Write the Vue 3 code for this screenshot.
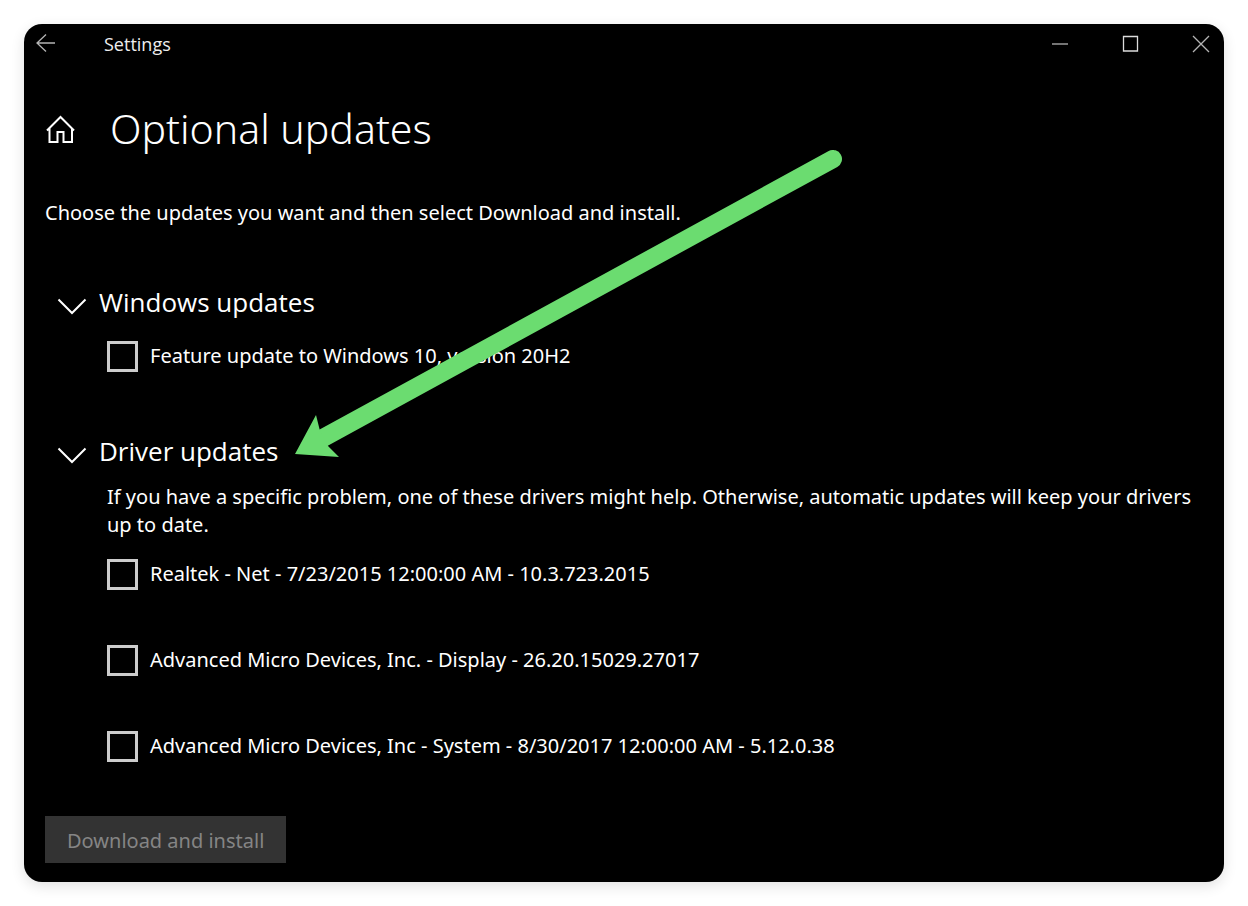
<script setup>
import { reactive } from 'vue'

const groups = reactive([
  {
    id: 'windows',
    title: 'Windows updates',
    note: '',
    open: true,
    items: [{ id: 'feature', label: 'Feature update to Windows 10, version 20H2', checked: false }],
  },
  {
    id: 'drivers',
    title: 'Driver updates',
    note: 'If you have a specific problem, one of these drivers might help. Otherwise, automatic updates will keep your drivers up to date.',
    open: true,
    items: [
      { id: 'realtek', label: 'Realtek - Net - 7/23/2015 12:00:00 AM - 10.3.723.2015', checked: false },
      { id: 'amd-display', label: 'Advanced Micro Devices, Inc. - Display - 26.20.15029.27017', checked: false },
      { id: 'amd-system', label: 'Advanced Micro Devices, Inc - System - 8/30/2017 12:00:00 AM - 5.12.0.38', checked: false },
    ],
  },
])
</script>

<template>
  <div class="window">
    <header class="titlebar">
      <button class="icon-button" type="button" aria-label="Back">
        <svg width="20" height="20" viewBox="0 0 20 20"><path d="M19 9H1M10 0.500L1 9L10 17.500" /></svg>
      </button>
      <span class="app-name">Settings</span>
      <div class="window-controls">
        <button class="icon-button" type="button" aria-label="Minimize">
          <svg width="18" height="18" viewBox="0 0 18 18"><path d="M0 9H16" /></svg>
        </button>
        <button class="icon-button" type="button" aria-label="Maximize">
          <svg class="bright" width="18" height="18" viewBox="0 0 18 18"><path d="M1.500 1.500H15.500V16H1.500Z" /></svg>
        </button>
        <button class="icon-button" type="button" aria-label="Close">
          <svg width="18" height="18" viewBox="0 0 18 18"><path d="M1 1L17 17M17 1L1 17" /></svg>
        </button>
      </div>
    </header>

    <main class="content">
      <div class="heading">
        <button class="icon-button" type="button" aria-label="Home">
          <svg class="home" width="30" height="32" viewBox="0 0 30 32">
            <path d="M2 18.500L15.500 5L29 18.500M4.500 16.500V30H12.500V20H18.500V30H27V16.500" />
          </svg>
        </button>
        <h1>Optional updates</h1>
      </div>
      <p class="intro">Choose the updates you want and then select Download and install.</p>

      <section v-for="group in groups" :key="group.id" class="group">
        <h2>
          <button class="disclosure" type="button" :aria-expanded="group.open" @click="group.open = !group.open">
            <svg class="chevron" :class="{ closed: !group.open }" width="30" height="18" viewBox="0 0 30 18">
              <path d="M1.500 2.500L15 16L28.500 2.500" />
            </svg>
            <span>{{ group.title }}</span>
          </button>
        </h2>
        <div v-if="group.open" class="group-body">
          <p v-if="group.note" class="note">{{ group.note }}</p>
          <ul>
            <li v-for="item in group.items" :key="item.id">
              <input :id="item.id" v-model="item.checked" type="checkbox" />
              <label :for="item.id">{{ item.label }}</label>
            </li>
          </ul>
        </div>
      </section>

      <button class="install" type="button" disabled>Download and install</button>
    </main>

    <svg class="pointer" width="548" height="310" viewBox="0 0 548 310" aria-hidden="true">
      <path class="shaft" d="M538 9L28 288" />
      <path class="head" d="M0 304L21 265L25 281L33 296L44 307Z" />
    </svg>
  </div>
</template>

<style>
body {
  background: #fff;
}
</style>

<style scoped>
* {
  box-sizing: border-box;
}

.window {
  position: relative;
  display: flex;
  flex-direction: column;
  min-height: calc(100vh - 48px);
  margin: 24px;
  border-radius: 18px;
  background: #000;
  box-shadow: 0 4px 14px rgba(0, 0, 0, 0.12);
  color: #fff;
  font-family: "Noto Sans", "Open Sans", sans-serif;
  font-size: 20px;
  line-height: 28px;
}

h1,
h2,
p,
ul {
  margin: 0;
  padding: 0;
}

button {
  border: 0;
  padding: 0;
  background: none;
  color: inherit;
  font: inherit;
}

svg {
  display: block;
  fill: none;
  stroke: #fff;
  stroke-width: 2;
}

.titlebar {
  display: flex;
  align-items: center;
  height: 40px;
  padding: 0 14px 0 12px;
}

.titlebar svg {
  stroke: #b4b4b4;
  stroke-width: 1.3;
}

.titlebar svg.bright {
  stroke: #dcdcdc;
}

.app-name {
  margin-left: 48px;
  color: #eee;
  font-family: "Open Sans", "Noto Sans", sans-serif;
  font-size: 18px;
}

.window-controls {
  display: flex;
  gap: 52px;
  margin-left: auto;
}

.content {
  flex: 1;
  display: flex;
  flex-direction: column;
  padding: 37px 22px 19px 21px;
}

.heading {
  display: flex;
  align-items: center;
  gap: 35px;
  height: 54px;
}

h1 {
  font-size: 41px;
  font-weight: 300;
  line-height: 54px;
}

.intro {
  margin-top: 44px;
}

.group {
  margin-top: 57px;
}

h2 {
  font-family: "Open Sans", "Noto Sans", sans-serif;
  font-size: 26px;
  font-weight: 400;
  line-height: 36px;
}

.disclosure {
  display: flex;
  align-items: center;
  gap: 12px;
  margin-left: 12px;
}

.chevron {
  margin-top: 8px;
}

.chevron.closed {
  transform: rotate(-90deg);
}

.group-body {
  padding: 14px 0 0 62px;
}

.note {
  margin-bottom: 15px;
}

ul {
  display: flex;
  flex-direction: column;
  gap: 46px;
  margin-top: 2px;
  list-style: none;
}

li {
  display: flex;
  align-items: center;
  gap: 12px;
  min-height: 40px;
}

input {
  appearance: none;
  flex: none;
  width: 31px;
  height: 31px;
  margin: 0;
  border: 3px solid #ccc;
  background: #000;
}

input:checked {
  background: #6bdc70;
}

.install {
  align-self: flex-start;
  height: 47px;
  margin-top: auto;
  padding: 2px 22px 0;
  background: #333;
  color: #858585;
}

.pointer {
  position: absolute;
  top: 126px;
  left: 271px;
  pointer-events: none;
}

.pointer .shaft {
  stroke: #6bdc70;
  stroke-width: 18;
  stroke-linecap: round;
}

.pointer .head {
  fill: #6bdc70;
  stroke: none;
}
</style>
